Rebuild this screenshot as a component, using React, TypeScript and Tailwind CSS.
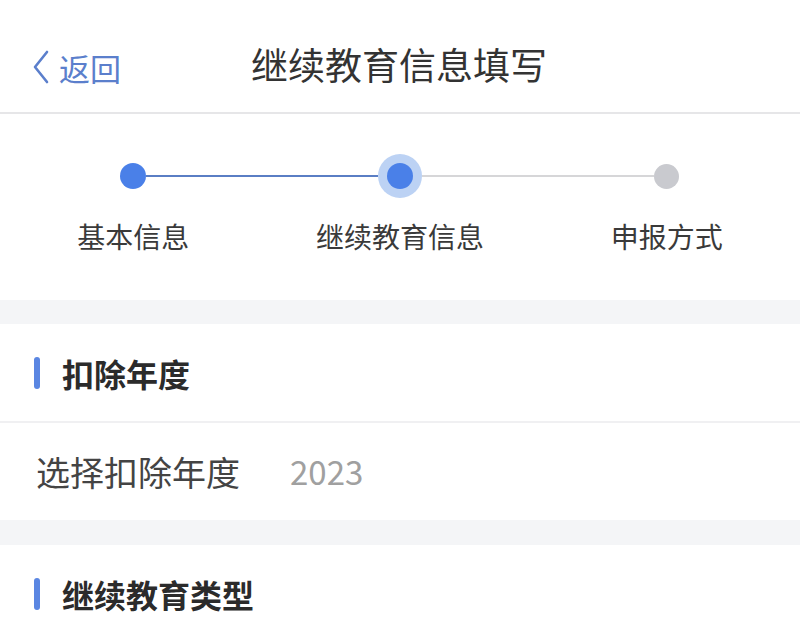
const font = { fontFamily: '"Noto Sans CJK SC", "Noto Sans", sans-serif' };

const steps = [
  { label: '基本信息', left: 'bg-transparent', right: 'bg-[#5a7ec4]', state: 'done' },
  { label: '继续教育信息', left: 'bg-[#5a7ec4]', right: 'bg-[#d6d6d8]', state: 'current' },
  { label: '申报方式', left: 'bg-[#d6d6d8]', right: 'bg-transparent', state: 'todo' },
];

function Dot({ state }: { state: string }) {
  if (state === 'current') {
    return (
      <div className="flex h-[44px] w-[44px] items-center justify-center rounded-full bg-[#bcd2f4]">
        <div className="h-[26px] w-[26px] rounded-full bg-[#4a80e8]" />
      </div>
    );
  }
  return (
    <div className="flex h-[44px] w-[26px] items-center justify-center">
      <div
        className={
          state === 'done'
            ? 'h-[26px] w-[26px] rounded-full bg-[#4a80e8]'
            : 'h-[25px] w-[25px] rounded-full bg-[#c9cacf]'
        }
      />
    </div>
  );
}

function SectionTitle({ children }: { children: string }) {
  return (
    <div className="flex h-[97px] items-center gap-[22px] pl-[34px]">
      <div className="h-[32px] w-[6px] rounded-full bg-[#5a86e2]" />
      <span className="text-[32px] font-bold text-[#2b2b2b]">{children}</span>
    </div>
  );
}

export default function App() {
  return (
    <div className="h-[618px] w-[800px] overflow-hidden bg-white" style={font}>
      {/* 顶部导航 */}
      <header className="relative flex h-[114px] items-center border-b-2 border-[#e6e6e8] pt-[16px]">
        <button className="absolute left-[32px] top-[50px] flex items-center text-[#5b7fcc]">
          <svg width="18" height="34" viewBox="0 0 18 34" fill="none">
            <path d="M15 2 L3 17 L15 32" stroke="#5b7fcc" strokeWidth="2.6" strokeLinecap="round" strokeLinejoin="round" />
          </svg>
          <span className="ml-[9px] text-[31px] leading-none">返回</span>
        </button>
        <h1 className="ml-[251px] text-[37px] leading-none text-[#333]">继续教育信息填写</h1>
      </header>

      {/* 步骤条 */}
      <section className="grid h-[186px] grid-cols-3 pt-[40px]">
        {steps.map((s) => (
          <div key={s.label} className="flex flex-col items-center">
            <div className="flex w-full items-center">
              <div className={`h-[2px] flex-1 ${s.left}`} />
              <Dot state={s.state} />
              <div className={`h-[2px] flex-1 ${s.right}`} />
            </div>
            <span className="mt-[20px] text-[28px] leading-[36px] text-[#3a3a3a]">{s.label}</span>
          </div>
        ))}
      </section>

      <div className="h-[24px] bg-[#f4f5f7]" />

      <section>
        <SectionTitle>扣除年度</SectionTitle>
        <div className="h-[2px] bg-[#f0f0f2]" />
        <div className="flex h-[97px] items-center pl-[36px]">
          <span className="text-[34px] text-[#444]">选择扣除年度</span>
          <span className="ml-[50px] text-[33px] text-[#a0a0a0]">2023</span>
        </div>
      </section>

      <div className="h-[25px] bg-[#f4f5f7]" />

      <section>
        <SectionTitle>继续教育类型</SectionTitle>
      </section>
    </div>
  );
}
